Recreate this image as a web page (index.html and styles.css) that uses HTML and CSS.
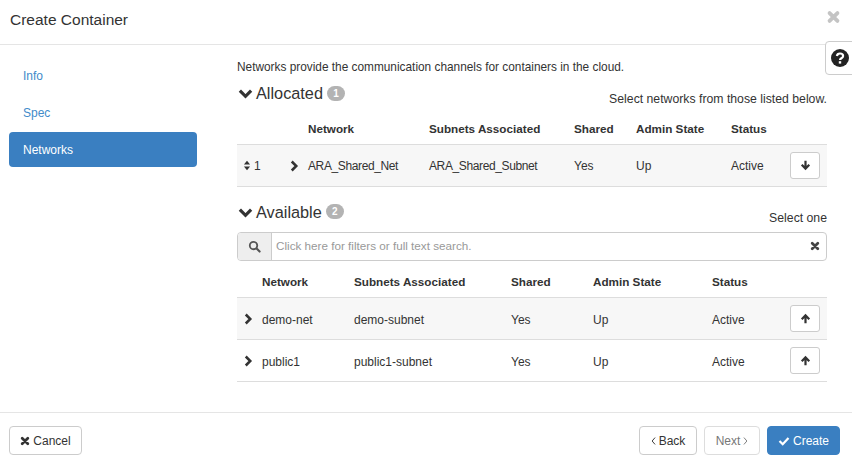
FILE: index.html
```html
<!DOCTYPE html>
<html lang="en">
<head>
<meta charset="utf-8">
<title>Create Container</title>
<link rel="stylesheet" href="styles.css">
</head>
<body>
<svg class="defs" width="0" height="0" aria-hidden="true">
  <symbol id="i-down" viewBox="0 0 16 16"><path d="M2 5l6 6 6-6" fill="none" stroke="currentColor" stroke-width="3.4"/></symbol>
  <symbol id="i-right" viewBox="0 0 16 16"><path d="M5 2l6 6-6 6" fill="none" stroke="currentColor" stroke-width="3.4"/></symbol>
  <symbol id="i-times" viewBox="0 0 16 16"><path d="M3.5 3.5l9 9M12.500 3.500l-9 9" fill="none" stroke="currentColor" stroke-width="4.4" stroke-linecap="round"/></symbol>
  <symbol id="i-search" viewBox="0 0 16 16"><circle cx="6.800" cy="6.800" r="4.600" fill="none" stroke="currentColor" stroke-width="2.200"/><path d="M10.300 10.300l4 4" stroke="currentColor" stroke-width="2.600" stroke-linecap="round"/></symbol>
  <symbol id="i-up" viewBox="0 0 16 16"><path d="M8 15V4M2.500 9l5.500-5.500L13.500 9" fill="none" stroke="currentColor" stroke-width="3.200"/></symbol>
  <symbol id="i-dn" viewBox="0 0 16 16"><path d="M8 1v11M2.500 7l5.500 5.500L13.500 7" fill="none" stroke="currentColor" stroke-width="3.200"/></symbol>
  <symbol id="i-sort" viewBox="0 0 10 16"><path d="M5 1l4.500 5.500h-9zM5 15L.5 9.500h9z" fill="currentColor"/></symbol>
  <symbol id="i-check" viewBox="0 0 16 16"><path d="M2 8l4.300 4.300L14 4" fill="none" stroke="currentColor" stroke-width="3"/></symbol>
  <symbol id="i-left-a" viewBox="0 0 8 16"><path d="M6.500 2.500L1.800 8l4.700 5.500" fill="none" stroke="currentColor" stroke-width="1.500"/></symbol>
  <symbol id="i-right-a" viewBox="0 0 8 16"><path d="M1.500 2.500L6.200 8l-4.700 5.500" fill="none" stroke="currentColor" stroke-width="1.500"/></symbol>
  <symbol id="i-help" viewBox="0 0 18 18"><circle cx="9" cy="9" r="9" fill="currentColor"/><path d="M5.900 7c.2-1.700 1.400-2.500 3.100-2.500 1.800 0 3.100 1 3.100 2.500 0 2.300-3.100 2.200-3.100 4" fill="none" stroke="#fff" stroke-width="2.200"/><rect x="7.800" y="12.200" width="2.400" height="2.400" fill="#fff"/></symbol>
</svg>

<div class="modal">
  <header class="modal-header">
    <h1 class="modal-title">Create Container</h1>
    <button class="close" type="button" aria-label="Close"><svg class="ic-close"><use href="#i-times"/></svg></button>
  </header>
  <a class="help-tab" href="#" aria-label="Help"><svg class="ic-help"><use href="#i-help"/></svg></a>

  <main class="modal-body">
    <nav class="steps">
      <a class="step" href="#">Info</a>
      <a class="step" href="#">Spec</a>
      <a class="step active" href="#">Networks</a>
    </nav>

    <section class="pane">
      <p class="intro">Networks provide the communication channels for containers in the cloud.</p>

      <div class="section-head head-allocated">
        <h2 class="section-title"><svg class="ic-section"><use href="#i-down"/></svg>Allocated<span class="badge">1</span></h2>
        <span class="hint">Select networks from those listed below.</span>
      </div>
      <table class="grid allocated">
        <thead>
          <tr><th class="c-sort"></th><th class="c-exp"></th><th class="c-net">Network</th><th class="c-sub">Subnets Associated</th><th class="c-sh">Shared</th><th class="c-adm">Admin State</th><th class="c-st">Status</th><th class="c-act"></th></tr>
        </thead>
        <tbody>
          <tr class="odd">
            <td class="sort-cell"><svg class="ic-sort"><use href="#i-sort"/></svg>1</td>
            <td class="exp-cell"><svg class="ic-chev"><use href="#i-right"/></svg></td>
            <td class="tight">ARA_Shared_Net</td><td class="tight">ARA_Shared_Subnet</td><td>Yes</td><td>Up</td><td>Active</td>
            <td class="act-cell"><button class="btn-move" type="button" aria-label="Remove"><svg class="ic-arrow"><use href="#i-dn"/></svg></button></td>
          </tr>
        </tbody>
      </table>

      <div class="section-head head-available">
        <h2 class="section-title"><svg class="ic-section"><use href="#i-down"/></svg>Available<span class="badge">2</span></h2>
        <span class="hint">Select one</span>
      </div>
      <div class="search">
        <span class="search-addon"><svg class="ic-search"><use href="#i-search"/></svg></span>
        <span class="search-field">Click here for filters or full text search.</span>
        <svg class="ic-clear"><use href="#i-times"/></svg>
      </div>
      <table class="grid available">
        <thead>
          <tr><th class="a-exp"></th><th class="a-net">Network</th><th class="a-sub">Subnets Associated</th><th class="a-sh">Shared</th><th class="a-adm">Admin State</th><th class="a-st">Status</th><th class="c-act"></th></tr>
        </thead>
        <tbody>
          <tr class="odd">
            <td class="exp-cell"><svg class="ic-chev"><use href="#i-right"/></svg></td>
            <td>demo-net</td><td>demo-subnet</td><td>Yes</td><td>Up</td><td>Active</td>
            <td class="act-cell"><button class="btn-move" type="button" aria-label="Add"><svg class="ic-arrow"><use href="#i-up"/></svg></button></td>
          </tr>
          <tr>
            <td class="exp-cell"><svg class="ic-chev"><use href="#i-right"/></svg></td>
            <td>public1</td><td>public1-subnet</td><td>Yes</td><td>Up</td><td>Active</td>
            <td class="act-cell"><button class="btn-move" type="button" aria-label="Add"><svg class="ic-arrow"><use href="#i-up"/></svg></button></td>
          </tr>
        </tbody>
      </table>
    </section>
  </main>

  <footer class="modal-footer">
    <button class="btn btn-cancel" type="button"><svg class="ic-btn"><use href="#i-times"/></svg>Cancel</button>
    <div class="footer-right">
      <button class="btn btn-back" type="button"><svg class="ic-angle"><use href="#i-left-a"/></svg>Back</button>
      <button class="btn btn-disabled" type="button">Next<svg class="ic-angle ic-angle-r"><use href="#i-right-a"/></svg></button>
      <button class="btn btn-primary" type="button"><svg class="ic-check"><use href="#i-check"/></svg>Create</button>
    </div>
  </footer>
</div>
</body>
</html>
```

FILE: styles.css
```css
* { box-sizing: border-box; }

html, body {
  margin: 0;
  height: 100%;
  overflow: hidden;
  background: #fff;
}

body {
  font: 12px/18px "Liberation Sans", Arial, sans-serif;
  color: #333;
}

.defs { position: absolute; }

svg { display: inline-block; }

.modal {
  position: relative;
  width: 852px;
  height: 466px;
  display: flex;
  flex-direction: column;
}

/* header */
.modal-header {
  height: 45px;
  flex: none;
  display: flex;
  justify-content: space-between;
  padding: 10px 11px 0 10px;
  border-bottom: 1px solid #e5e5e5;
}

.modal-title {
  margin: 0;
  font-size: 15.500px;
  font-weight: 400;
  line-height: 20px;
}

.close {
  border: 0;
  padding: 0;
  background: none;
  width: 15px;
  height: 14px;
  color: #c4c4c4;
  display: flex;
}

.ic-close { width: 15px; height: 14px; }

.help-tab {
  position: absolute;
  left: 825px;
  top: 41px;
  width: 30px;
  height: 34px;
  background: #fff;
  border: 1px solid #ccc;
  border-radius: 4px 0 0 4px;
  color: #222;
  display: flex;
  align-items: center;
  padding-left: 5px;
}

.ic-help { width: 18px; height: 18px; }

/* body */
.modal-body {
  flex: 1;
  display: flex;
  min-height: 0;
}

.steps {
  width: 237px;
  flex: none;
  padding: 13px 40px 0 9px;
  display: flex;
  flex-direction: column;
  gap: 2px;
}

.step {
  height: 35px;
  padding: 0 14px;
  display: flex;
  align-items: center;
  border-radius: 4px;
  color: #428bca;
  text-decoration: none;
}

.step.active {
  background: #3a7fc1;
  color: #fff;
}

.pane {
  width: 590px;
  padding-top: 13px;
}

.intro {
  margin: 0;
  font-size: 11.850px;
  line-height: 18px;
  height: 18px;
}

.section-head {
  display: flex;
  justify-content: space-between;
}

.head-allocated { margin-top: 6px; height: 26px; }
.head-available { margin-top: 14px; height: 31px; }

.section-title {
  margin: 0;
  font-size: 16.300px;
  font-weight: 400;
  line-height: 22px;
  height: 22px;
  display: flex;
  align-items: center;
}

.ic-section { width: 15px; height: 15px; margin: 1px 3px 0 1px; color: #333; }

.badge {
  margin-left: 4px;
  width: 18px;
  height: 15px;
  border-radius: 8px;
  background: #b3b3b3;
  color: #fff;
  font-size: 10px;
  font-weight: 700;
  line-height: 15px;
  text-align: center;
}

.hint { font-size: 12.250px; line-height: 18px; padding-top: 8px; }

/* search */
.search {
  height: 29px;
  display: flex;
  align-items: center;
  border: 1px solid #ccc;
  border-radius: 4px;
}

.search-addon {
  width: 34px;
  height: 27px;
  flex: none;
  display: flex;
  align-items: center;
  justify-content: center;
  background: #eee;
  border-right: 1px solid #ccc;
  border-radius: 3px 0 0 3px;
  color: #555;
}

.ic-search { width: 13px; height: 13px; }

.search-field {
  flex: 1;
  padding-left: 4px;
  font-size: 11.700px;
  color: #999;
}

.ic-clear { width: 10px; height: 10px; margin-right: 6px; color: #444; }

/* tables */
.grid {
  width: 590px;
  table-layout: fixed;
  border-collapse: collapse;
  font-size: 12px;
}

.grid th {
  height: 36px;
  padding: 0 8px 6px;
  text-align: left;
  font-weight: 700;
  font-size: 11.700px;
  border-bottom: 1px solid #ddd;
  vertical-align: bottom;
}

.available th { height: 37px; }

.grid td {
  height: 42px;
  padding: 2px 8px 0;
  border-bottom: 1px solid #ddd;
  vertical-align: middle;
  white-space: nowrap;
}

.grid .tight { letter-spacing: -0.380px; }

.odd td { background: #f7f7f7; }

.c-sort { width: 47px; }
.c-exp { width: 16px; }
.c-net { width: 121px; }
.c-sub { width: 145px; }
.c-sh { width: 62px; }
.c-adm { width: 95px; }
.c-st { width: 59px; }
.c-act { width: 45px; }

.a-exp { width: 17px; }
.a-net { width: 92px; }
.a-sub { width: 157px; }
.a-sh { width: 82px; }
.a-adm { width: 119px; }
.a-st { width: 78px; }

.grid .sort-cell { padding: 2px 0 0 6px; }
.ic-sort { width: 8px; height: 11px; margin-right: 3px; vertical-align: -1px; }

.grid .exp-cell { padding: 1px 0 0 5px; }
.allocated .grid .exp-cell, .grid.allocated .exp-cell { padding-left: 4px; }
.ic-chev { width: 12px; height: 12px; display: block; color: #333; }

.grid .act-cell { padding: 0 7px 0 8px; }

.btn-move {
  width: 30px;
  height: 27px;
  padding: 0;
  display: flex;
  align-items: center;
  justify-content: center;
  background: #fff;
  border: 1px solid #ccc;
  border-radius: 3px;
  color: #333;
}

.ic-arrow { width: 11px; height: 11px; }

/* footer */
.modal-footer {
  height: 54px;
  flex: none;
  border-top: 1px solid #e5e5e5;
  padding: 13px 12px 0 9px;
  display: flex;
  justify-content: space-between;
  align-items: flex-start;
}

.footer-right { display: flex; gap: 7px; }

.btn {
  height: 29px;
  padding: 0;
  display: inline-flex;
  align-items: center;
  justify-content: center;
  background: #fff;
  border: 1px solid #ccc;
  border-radius: 4px;
  color: #333;
  font: 12px/18px "Liberation Sans", Arial, sans-serif;
}

.btn-cancel { width: 73px; }
.btn-back { width: 58px; }

.btn-disabled {
  color: #777;
  border-color: #ddd;
  width: 56px;
}

.btn-primary {
  background: #3a7fc1;
  border-color: #3a7fc1;
  color: #fff;
  width: 73px;
}

.ic-btn { width: 10px; height: 10px; margin-right: 3px; }
.ic-check { width: 12px; height: 12px; margin-right: 3px; }
.ic-angle { width: 5px; height: 10px; margin-right: 3px; }
.ic-angle-r { margin: 0 0 0 3px; }
```
